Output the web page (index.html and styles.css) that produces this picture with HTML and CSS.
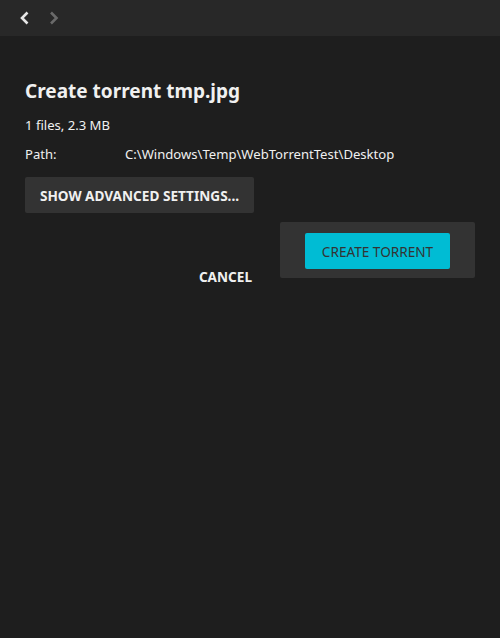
FILE: index.html
```html
<!DOCTYPE html>
<html lang="en">
<head>
    <meta charset="UTF-8">
    <title>Create torrent</title>
    <link rel="stylesheet" href="styles.css">
</head>
<body>
    <div class="header">
        <svg class="nav" width="12" height="14" viewBox="0 0 12 14"><path d="M9.5 1.5 L4 7 L9.5 12.5" fill="none" stroke="#e6e6e6" stroke-width="2.6"/></svg>
        <svg class="nav next" width="12" height="14" viewBox="0 0 12 14"><path d="M3 1.5 L8.5 7 L3 12.5" fill="none" stroke="#6a6a6a" stroke-width="2.6"/></svg>
    </div>
    <div class="contenido">
        <h1>Create torrent tmp.jpg</h1>
        <p class="info">1 files, 2.3 MB</p>
        <div class="ruta">
            <span class="etiqueta">Path:</span>
            <span>C:\Windows\Temp\WebTorrentTest\Desktop</span>
        </div>
        <button class="avanzado">SHOW ADVANCED SETTINGS...</button>
        <div class="acciones">
            <span class="cancelar">CANCEL</span>
            <div class="caja">
                <button class="crear">CREATE TORRENT</button>
            </div>
        </div>
    </div>
</body>
</html>
```
FILE: styles.css
```css
body{
    margin: 0;
    padding: 0;
    background-color: #1e1e1e;
    color: #f0f0f0;
    font-family: "Noto Sans", "Open Sans", sans-serif;
    font-size: 13.1px;
    height: 638px;
}
.header{
    height: 36px;
    background-color: #282828;
    display: flex;
    align-items: center;
    padding-left: 18px;
}
.nav{
    display: block;
}
.nav.next{
    margin-left: 18px;
}
.contenido{
    padding: 40px 25px 0 25px;
}
h1{
    margin: 0;
    font-size: 19px;
    font-weight: bold;
    line-height: 30px;
}
.info{
    margin: 9px 0 0 0;
    line-height: 20px;
}
.ruta{
    display: flex;
    margin-top: 9px;
    line-height: 20px;
}
.etiqueta{
    width: 100px;
}
.avanzado{
    margin-top: 13px;
    height: 36px;
    width: 229px;
    background-color: #333333;
    color: #f0f0f0;
    border: none;
    border-radius: 2px;
    font-family: inherit;
    font-size: 13.6px;
    font-weight: bold;
    padding: 0;
}
.acciones{
    display: flex;
    justify-content: flex-end;
    align-items: flex-end;
    margin-top: 9px;
}
.cancelar{
    font-weight: bold;
    font-size: 13.6px;
    margin-right: 28px;
    line-height: 20px;
    margin-bottom: -9px;
}
.caja{
    background-color: #333333;
    border-radius: 2px;
    padding: 11px 25px 9px 25px;
}
.crear{
    display: block;
    width: 145px;
    height: 36px;
    background-color: #00bcd4;
    color: #333333;
    border: none;
    border-radius: 2px;
    font-family: inherit;
    font-size: 13.6px;
    padding: 0;
}
```
